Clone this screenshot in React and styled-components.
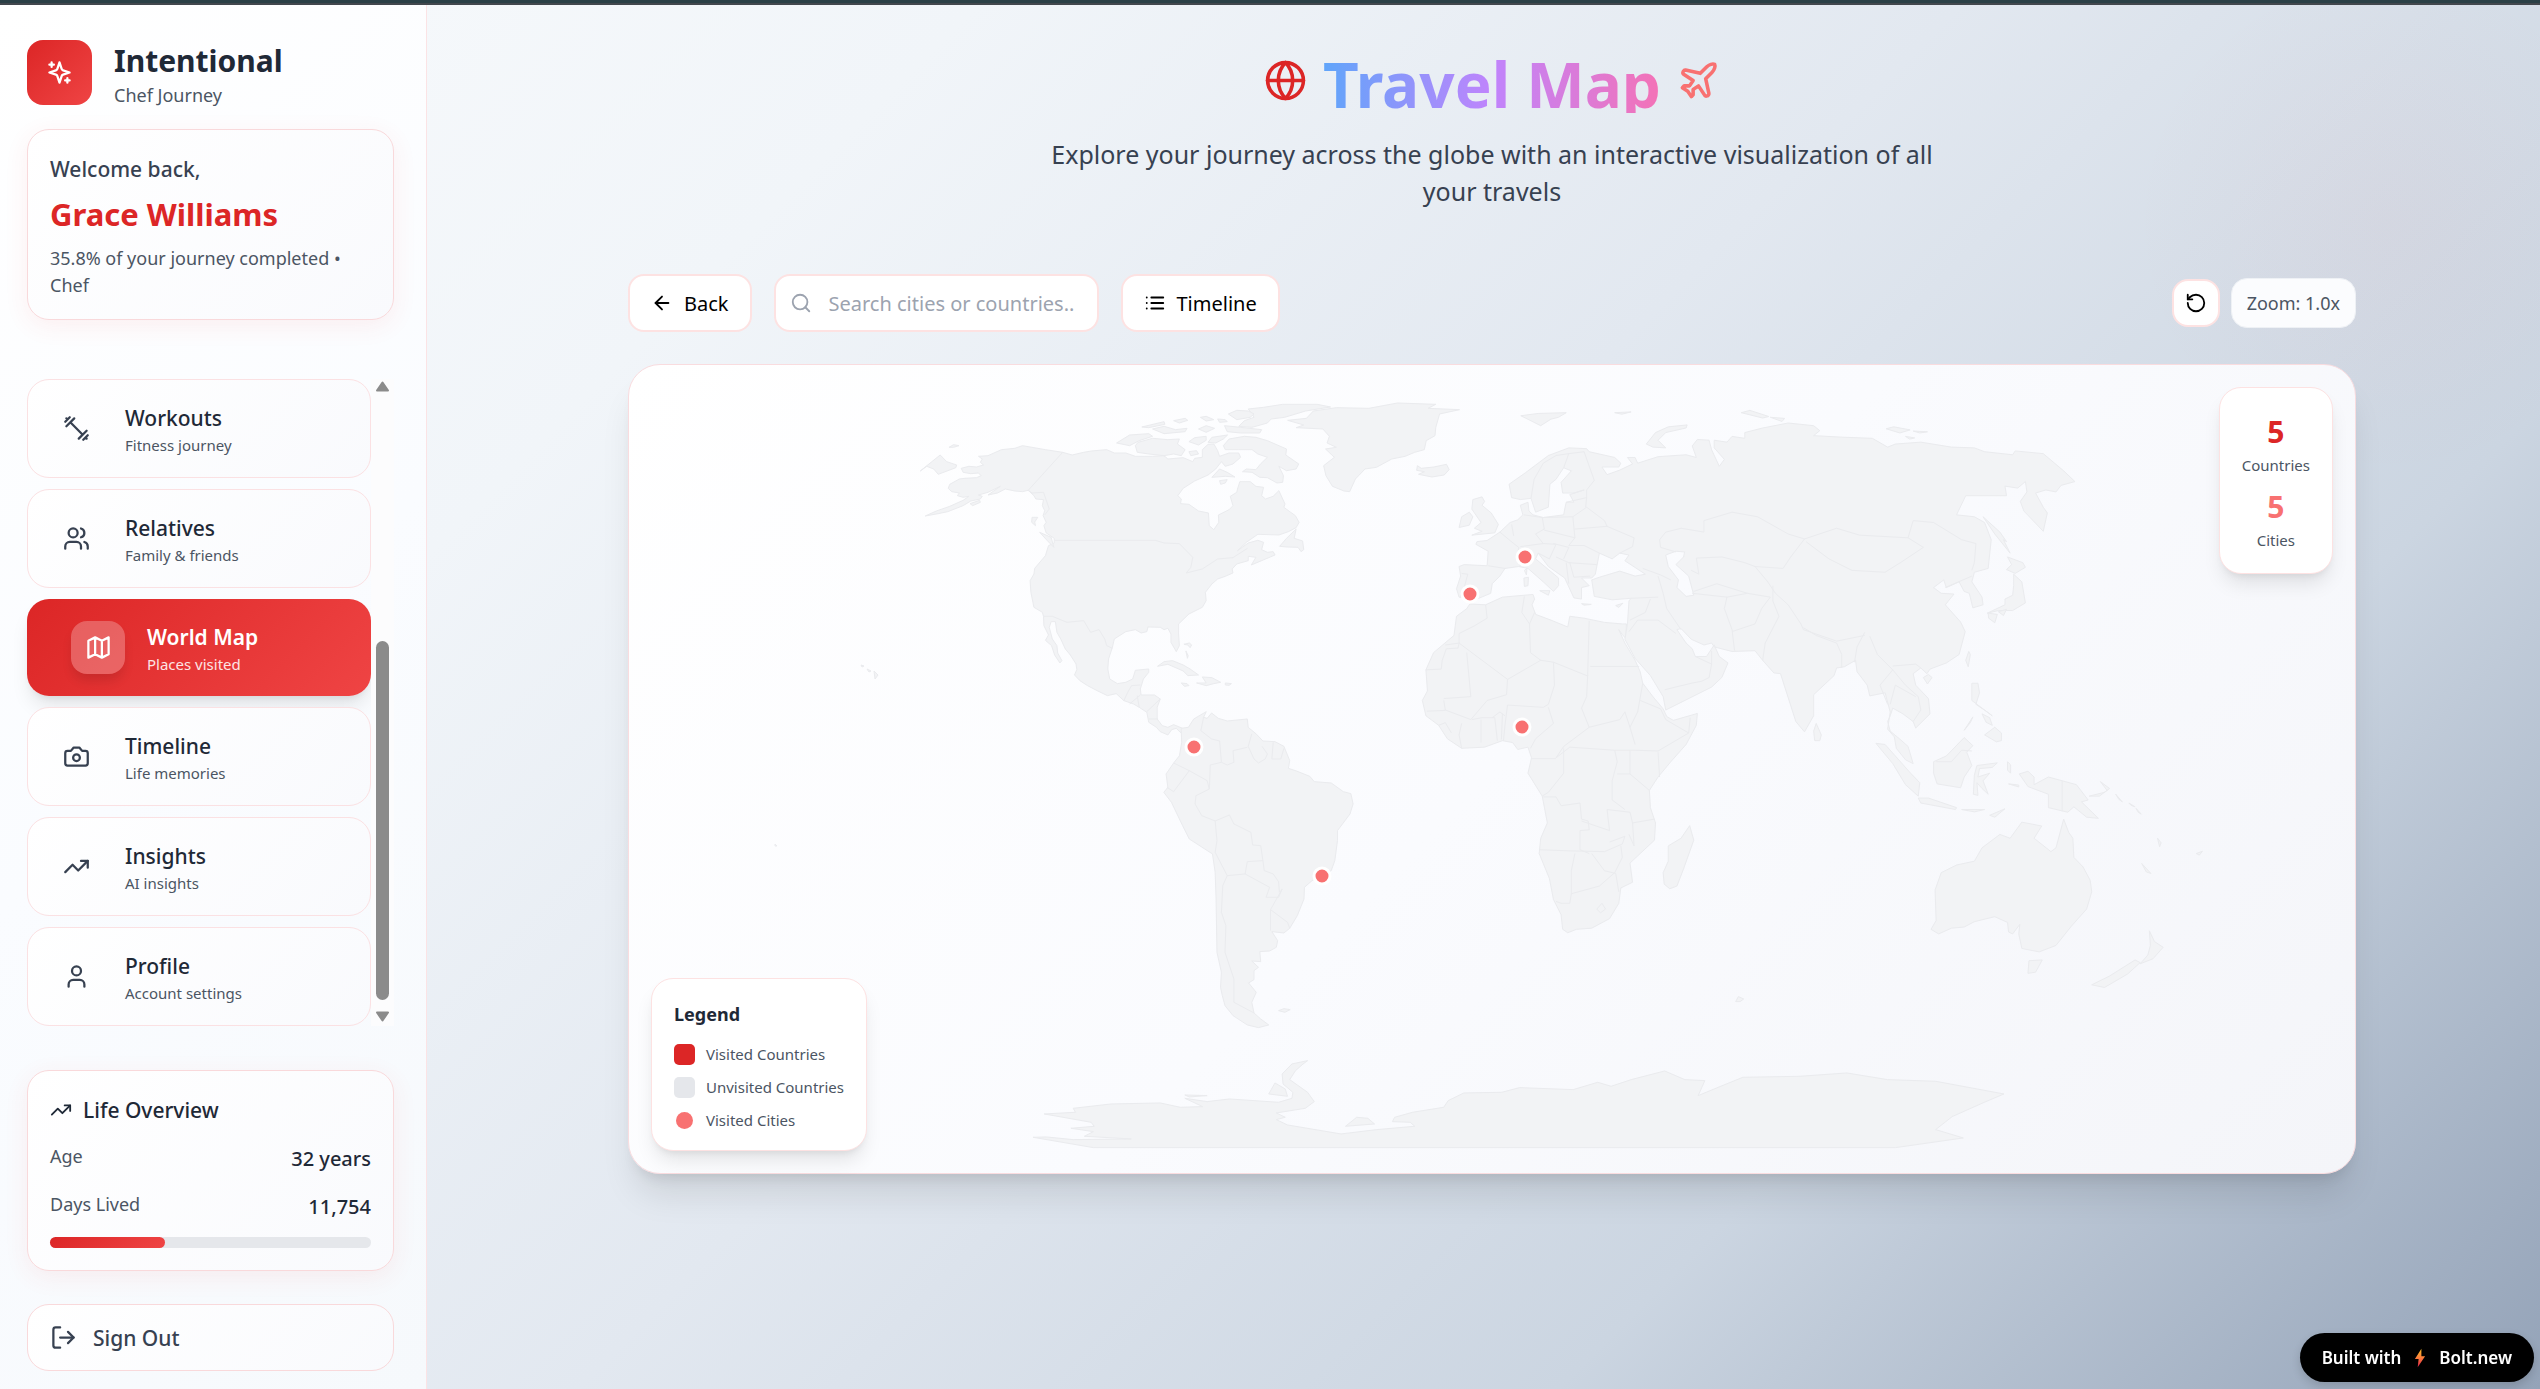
import React from 'react'
import styled, { createGlobalStyle, css } from 'styled-components'
import { ArrowLeft, Globe, LogOut, Plane, RotateCcw, Search, TrendingUp, User, Users } from 'lucide-react'

const GlobalStyle = createGlobalStyle`
  * { box-sizing: border-box; }
  body {
    margin: 0;
    font-family: 'Noto Sans', 'Open Sans', sans-serif;
    color: #1f2937;
  }
  h1, h2, h3, p, ul, dl, dd { margin: 0; padding: 0; }
  button, input { font-family: inherit; }
`

/* icons that lucide-react draws differently */
const Svg = ({ size = 27, children }) => (
  <svg width={size} height={size} viewBox="0 0 24 24" fill="none" stroke="currentColor" strokeWidth="2" strokeLinecap="round" strokeLinejoin="round" aria-hidden="true">
    {children}
  </svg>
)

const Sparkles = () => (
  <Svg>
    <path d="m12 3-1.912 5.813a2 2 0 0 1-1.275 1.275L3 12l5.813 1.912a2 2 0 0 1 1.275 1.275L12 21l1.912-5.813a2 2 0 0 1 1.275-1.275L21 12l-5.813-1.912a2 2 0 0 1-1.275-1.275L12 3Z" />
    <path d="M5 3v4M19 17v4M3 5h4M17 19h4" />
  </Svg>
)

const Dumbbell = () => (
  <Svg>
    <path d="m6.5 6.5 11 11M21 21l-1-1M3 3l1 1M18 22l4-4M2 6l4-4M3 10l7-7M14 21l7-7" />
  </Svg>
)

const MapIcon = () => (
  <Svg>
    <path d="M3 6l6-3 6 3 6-3v15l-6 3-6-3-6 3ZM9 3v15M15 6v15" />
  </Svg>
)

const Camera = () => (
  <Svg>
    <path d="M14.5 4h-5L7 7H4a2 2 0 0 0-2 2v9a2 2 0 0 0 2 2h16a2 2 0 0 0 2-2V9a2 2 0 0 0-2-2h-3l-2.5-3z" />
    <circle cx="12" cy="13" r="3" />
  </Svg>
)

const ListIcon = () => (
  <Svg size={22}>
    <path d="M8 6h13M8 12h13M8 18h13M3 6h.01M3 12h.01M3 18h.01" />
  </Svg>
)

const navItems = [
  { title: 'Workouts', sub: 'Fitness journey', icon: <Dumbbell /> },
  { title: 'Relatives', sub: 'Family & friends', icon: <Users size={27} /> },
  { title: 'World Map', sub: 'Places visited', icon: <MapIcon />, active: true },
  { title: 'Timeline', sub: 'Life memories', icon: <Camera /> },
  { title: 'Insights', sub: 'AI insights', icon: <TrendingUp size={27} /> },
  { title: 'Profile', sub: 'Account settings', icon: <User size={27} /> },
]

const cities = [
  { name: 'Seville', x: 841, y: 229 },
  { name: 'Milan', x: 896, y: 192 },
  { name: 'Abuja', x: 893, y: 362 },
  { name: 'Bogota', x: 565, y: 382 },
  { name: 'Rio de Janeiro', x: 693, y: 511 },
]

const northAmerica = [
  // mainland
  'M205 232 215 240 210 250 218 258 200 264 180 262 160 268 165 280 185 284 205 282 212 290 200 296 170 298 155 300 130 316 126 328 135 338 155 342 150 350 165 355 180 352 165 364 130 382 95 396 66 411 100 404 125 398 165 380 185 366 210 360 215 352 205 348 230 340 262 322 230 348 255 342 275 330 300 336 320 338 335 334 350 350 355 360 375 362 372 380 378 395 374 410 382 430 376 440 382 462 403 478 403 492 388 500 380 530 352 568 350 585 340 605 342 640 350 685 372 700 375 712 376 740 388 768 380 784 396 800 404 828 418 852 423 845 412 822 410 800 398 780 390 745 395 728 406 728 410 760 420 780 432 810 445 828 460 855 462 872 456 888 470 905 490 920 515 935 542 950 565 944 585 965 610 975 625 985 645 1000 650 1030 670 1045 680 1058 700 1068 710 1052 722 1048 734 1062 738 1048 715 1037 700 1045 685 1040 672 1020 672 985 680 960 665 948 630 948 628 930 636 900 650 880 650 870 615 874 608 900 590 910 568 914 548 900 543 870 545 840 555 805 560 780 590 758 615 752 630 762 645 758 648 744 680 745 690 752 700 748 708 765 708 790 722 818 730 800 728 765 728 735 755 705 790 685 800 665 798 640 815 615 830 600 850 592 870 582 868 570 880 555 910 545 910 532 930 535 918 558 945 545 980 528 975 518 960 520 945 512 950 490 935 484 910 492 882 515 905 490 935 466 990 468 1015 458 1035 446 1043 430 1033 410 1003 385 1006 375 990 335 975 352 955 360 945 350 950 325 930 322 915 308 888 308 882 330 880 340 863 352 870 380 860 392 832 408 833 430 820 452 808 440 806 402 780 396 755 376 733 374 735 360 726 350 740 328 770 306 805 288 825 270 840 248 850 262 870 255 890 235 885 222 860 222 835 232 830 215 820 195 805 196 790 212 790 235 770 238 765 248 740 236 700 240 690 230 660 232 640 232 615 232 590 222 560 222 540 212 500 216 480 220 450 228 425 220 380 212 320 200 300 208 265 212 230 230Z',
  // arctic islands
  'M615 200 622 190 660 178 700 182 730 180 725 195 745 212 735 230 715 225 690 230 650 225 620 220Z',
  'M566 192 600 168 650 164 660 172 625 185 600 200Z',
  'M845 200 860 180 900 172 930 175 960 185 1010 210 1008 228 1042 255 1035 270 1010 275 990 262 1002 290 1000 310 985 312 960 296 940 295 920 280 895 278 905 270 930 272 942 255 960 235 935 225 920 212 885 212 850 212Z',
  'M910 90 950 85 1000 76 1090 76 1125 84 1060 96 1005 115 970 120 960 132 920 145 885 142 900 125 925 115 920 104Z',
  'M848 140 890 145 945 152 940 162 890 162 855 158Z',
  'M858 105 880 94 910 96 925 105 915 115 880 122Z',
  'M755 188 770 176 800 172 800 184 780 198Z',
  'M805 190 815 175 856 168 845 180 825 192Z',
  'M632 144 690 128 692 136 650 146Z',
  'M660 150 690 142 720 152 750 148 745 158 690 164Z',
  'M715 125 745 118 752 124 730 132Z',
  'M780 150 800 140 822 148 800 160Z',
  'M785 115 800 112 820 122 800 126Z',
  'M830 120 850 122 855 128 835 130Z',
  'M755 218 775 215 780 225 760 230Z',
  'M815 295 835 270 855 280 875 294 850 292Z',
  'M835 305 855 302 850 312 838 316Z',
  'M128 205 140 197 154 200 140 205Z',
  // coasts and caribbean
  'M992 502 1010 478 1035 450 1030 478 1052 486 1055 512 1048 518 1040 505 1010 504Z',
  'M365 460 395 475 402 505 385 485Z',
  'M345 415 360 415 352 429 354 440 344 430Z',
  'M53 276 105 228 122 248 148 258 146 266 100 286 88 270 70 262Z',
  'M183 374 208 364 210 370 190 380Z',
  'M673 862 690 848 712 845 740 858 758 870 780 888 752 890 740 876 700 856Z',
  'M775 912 800 912 790 894 815 896 838 910 820 914 800 920Z',
  'M735 912 750 914 755 920 743 922Z',
  'M850 912 866 914 860 919 850 918Z',
  'M742 796 756 792 762 798 758 806 752 798ZM747 816 753 830 751 838Z',
  // greenland, iceland
  'M1013 124 1062 118 1080 96 1140 86 1225 88 1300 72 1400 76 1380 88 1462 92 1410 105 1400 145 1398 170 1375 185 1370 212 1345 220 1320 232 1285 240 1245 265 1215 270 1190 300 1175 338 1160 336 1130 322 1113 290 1107 260 1135 235 1112 210 1140 205 1116 192 1122 172 1105 150 1035 146 1055 138Z',
  'M1352 260 1362 268 1395 264 1428 256 1435 272 1422 288 1390 294 1355 286 1370 278 1350 274Z',
]

const northBorders =
  'M425 220 335 334 345 342 375 340 390 390 378 408M403 484H667L690 492 730 494 765 535 760 565 748 582 790 570 830 540 870 536 908 508M375 712 398 712 436 730 480 725 498 760 520 752 535 780 540 800 555 808M585 965 595 940 605 920 628 918M628 948 600 975M620 950 625 985M645 998 680 960M650 1020 674 1020'

const southAmerica = [
  'M182 208 198 205 210 180 238 158 232 175 240 178 250 162 265 178 285 186 330 180 332 205 350 225 365 246 392 248 412 262 425 305 422 328 440 336 470 352 480 368 518 372 545 398 562 404 567 435 560 465 532 515 532 545 526 605 518 635 475 665 458 685 457 720 442 770 425 808 412 822 385 818 398 845 395 865 380 876 358 878 360 908 340 906 355 925 345 935 345 962 333 972 350 1000 340 1030 345 1062 360 1080 378 1098 355 1106 330 1098 298 1070 280 1040 274 1010 270 985 272 940 262 880 260 720 258 640 252 585 200 540 185 500 160 430 143 400 152 385 148 345 165 312 178 290 183 250 182 215Z',
  'M400 1055 412 1049 426 1052 414 1060Z',
  'M1424 1028 1430 1013 1442 1020 1434 1028Z',
]

const southBorders =
  'M232 175 226 215 250 240 268 246 272 310 285 318 300 310 298 275 330 265M340 225 332 262 345 300 355 312 370 300 375 285 363 262M388 250 385 300 405 300 412 268M165 312 200 335 240 365 245 390 215 410 213 435 228 470 258 486 290 468 300 495 338 520 342 558 360 560 365 605 330 608 325 645M200 335 165 398 150 385M258 486 262 545 258 580 285 650 325 645 380 685 372 715 400 715 408 690M365 605 368 635 388 645 400 668 402 700M285 650 275 680 272 760 282 800 280 880 300 960 300 1030 345 1062M408 690 382 752 420 790 425 808M382 752 382 815M272 310 247 318 245 390'

const antarctica = [
  'M-150 1435-120 1434-60 1442 70 1440-35 1432-15 1418-65 1408-13 1402-20 1390-125 1365-55 1360-60 1348 25 1335 135 1332 180 1345 230 1343 190 1318 240 1328 290 1320 400 1330 430 1318 432 1300 410 1275 408 1245 430 1215 465 1205 455 1215 438 1235 425 1262 465 1300 480 1328 460 1348 395 1362 415 1375 395 1382 420 1398 540 1425 620 1412 705 1402 695 1390 655 1388 660 1375 700 1360 770 1345 780 1325 815 1302 900 1300 940 1286 1060 1292 1115 1270 1145 1282 1190 1262 1265 1236 1310 1262 1355 1265 1340 1310 1385 1285 1440 1255 1568 1252 1673 1242 1764 1262 1872 1267 2025 1305 1981 1330 1909 1373 1872 1412 1934 1437 1782 1466-15 1466Z',
  'M378 1305 392 1272 415 1290 420 1312Z',
  'M550 1402 575 1375 600 1378 615 1395Z',
  'M190 1308 240 1310 200 1314Z',
]

const oldWorld = [
  // africa
  'M176 588 207 590 240 570 300 563 303 575 298 590 305 615 335 630 368 648 372 620 400 625 440 636 475 640 483 640 482 678 475 668 468 655 480 690 500 735 510 765 515 795 535 830 555 862 562 882 575 892 622 874 620 905 600 955 570 1000 545 1040 528 1075 530 1120 540 1160 538 1205 510 1240 490 1265 495 1315 472 1330 468 1370 450 1410 415 1435 385 1438 368 1447 358 1438 355 1400 340 1360 332 1305 312 1240 315 1200 328 1160 318 1090 290 1030 297 990 290 962 270 968 260 950 240 945 205 962 160 965 132 940 115 905 90 880 83 840 93 815 90 760 105 715 145 670 150 620 170 600Z',
  'M565 1220 590 1200 607 1167 615 1205 595 1280 582 1325 568 1332 557 1320 555 1290 565 1260Z',
  // eurasia, with the caspian cut out
  'M155 490 165 485 210 488 212 450 188 432 190 425 210 422 235 400 255 375 270 368 280 355 275 330 290 322 292 345 300 355 320 362 360 355 362 340 365 322 380 322 372 302 400 290 380 298 358 298 355 270 375 240 360 232 345 262 333 275 330 335 305 348 296 312 275 315 258 310 253 275 285 245 330 200 370 180 405 182 410 190 460 205 472 220 468 230 435 230 445 250 470 238 495 222 485 205 500 205 505 220 545 203 600 198 620 205 612 175 622 158 645 160 650 185 665 228 675 210 655 180 655 160 680 165 690 150 715 155 715 140 750 128 800 115 850 122 862 135 850 148 905 152 965 155 995 178 1010 170 1060 165 1120 178 1165 180 1185 190 1240 198 1245 188 1300 195 1340 240 1362 268 1335 278 1325 295 1305 290 1285 298 1300 335 1308 350 1300 398 1262 345 1255 320 1268 295 1265 268 1250 285 1225 280 1228 305 1148 305 1130 355 1165 360 1185 375 1198 420 1192 495 1165 505 1160 530 1180 570 1182 590 1162 598 1155 560 1145 555 1135 530 1110 545 1105 525 1085 545 1100 560 1125 562 1108 590 1138 635 1147 660 1135 720 1110 742 1078 758 1072 770 1060 755 1045 770 1050 800 1075 835 1078 875 1050 912 1045 895 1025 875 1005 860 1000 880 995 895 1000 920 1018 940 1035 960 1045 1005 1030 995 1012 965 1008 935 995 915 1000 870 990 820 960 828 955 800 935 765 932 735 910 752 895 755 890 775 850 825 850 880 832 922 815 895 785 770 772 768 750 735 735 710 690 712 655 700 650 690 635 695 610 680 590 652 582 655 600 690 612 705 618 725 640 725 655 695 665 725 682 742 670 780 650 805 590 845 560 865 555 830 530 775 500 730 480 680 485 640 488 580 492 573 455 577 420 568 415 525 430 518 470 502 500 515 520 510 480 475 488 460 470 455 455 470 430 455 422 510 415 520 395 520 410 540 395 545 395 575 380 572 362 520 330 490 310 455 305 470 350 520 350 540 340 555 320 530 290 495 272 490 245 495 235 515 220 535 217 560 190 575 155 570 150 548 158 515ZM560 460 580 450 597 452 595 465 580 485 605 515 615 565 600 568 582 545 585 525 565 490Z',
  // british isles and the arctic
  'M180 408 200 398 185 390 198 375 180 340 182 315 200 308 205 320 200 330 218 350 232 380 225 402Z',
  'M155 388 160 360 175 348 182 360 175 382Z',
  'M276 96 310 90 365 88 350 100 335 105 315 122 300 112Z',
  'M522 170 540 140 565 125 602 120 600 128 560 140 545 160 560 180 535 178Z',
  'M708 88 725 82 762 98 750 102ZM765 100 793 103 788 111Z',
  'M992 130 1007 125 1039 133 1019 141ZM1045 136 1073 138 1058 141ZM1030 150 1048 154 1038 157Z',
  'M460 88 492 86 474 92Z',
  // mediterranean
  'M282 520 291 518 290 540 283 542ZM283 500 288 495 287 512ZM313 553 333 553 330 565ZM395 587 414 589 400 591ZM462 592 476 586 468 597Z',
  // japan and the pacific rim
  'M1182 360 1215 400 1228 425 1222 420 1235 455 1205 405Z',
  'M1230 465 1260 480 1265 492 1245 508 1228 498 1238 485Z',
  'M1242 510 1258 530 1265 585 1240 605 1212 605 1190 612 1225 590 1225 575 1240 565 1242 540Z',
  'M1192 612 1210 615 1205 637 1193 625ZM1212 608 1228 602 1222 618Z',
  'M1148 735 1154 712 1157 720 1153 752Z',
  'M1065 780 1075 772 1082 780 1073 797Z',
  'M1160 795 1172 795 1175 820 1168 850 1190 870 1200 880 1160 840Z',
  'M1185 930 1205 910 1218 925 1218 945 1208 948Z',
  'M1180 875 1195 885 1200 905 1188 897ZM1145 918 1162 883 1157 898Z',
  'M850 920 855 900 865 930 862 945 852 945Z',
  // indonesia and new guinea
  'M972 952 990 955 1040 1030 1058 1055 1055 1090 1030 1060 1005 1005Z',
  'M1055 1095 1075 1095 1130 1120 1128 1125 1060 1108Z',
  'M1085 1000 1110 985 1145 937 1162 958 1150 975 1160 1010 1145 1040 1138 1068 1092 1058 1085 1030Z',
  'M1165 1035 1170 1010 1210 1003 1200 1015 1175 1018 1172 1040 1195 1030 1182 1050 1192 1085 1180 1070 1170 1055 1172 1088 1163 1085Z',
  'M1230 1000 1236 1008 1236 1030 1230 1022ZM1232 1058 1252 1061 1252 1066Z',
  'M1140 1125 1185 1125 1165 1131ZM1195 1140 1225 1123 1205 1145Z',
  'M1253 1032 1270 1025 1282 1040 1282 1060 1310 1040 1365 1060 1388 1100 1375 1105 1408 1148 1385 1145 1360 1118 1348 1132 1310 1120 1310 1085 1270 1065Z',
  'M1390 1090 1420 1080 1430 1070 1412 1052 1425 1075 1410 1090Z',
  'M1442 1085 1455 1105 1448 1098ZM1468 1108 1480 1118 1472 1114ZM1482 1122 1492 1137 1486 1132ZM1524 1200 1531 1212 1528 1222ZM1493 1266 1511 1292 1502 1288Z',
  // oceania
  'M1100 1290 1130 1270 1165 1260 1180 1225 1215 1190 1235 1200 1258 1158 1297 1168 1282 1200 1315 1235 1325 1225 1340 1150 1350 1185 1358 1200 1360 1250 1378 1275 1392 1310 1395 1340 1385 1385 1355 1430 1325 1480 1292 1497 1258 1488 1252 1450 1254 1425 1240 1450 1232 1445 1230 1420 1205 1405 1165 1418 1145 1432 1120 1435 1095 1450 1080 1438 1090 1415 1088 1335Z',
  'M1272 1520 1298 1518 1285 1550 1270 1553Z',
  'M1508 1442 1518 1470 1535 1485 1515 1515 1490 1528 1505 1505 1510 1480Z',
  'M1480 1518 1490 1525 1465 1555 1420 1590 1395 1583 1430 1560Z',
  'M1600 1240 1612 1234 1606 1244Z',
]

const oldBorders =
  'M207 590 210 625 185 645 155 665 155 690 128 695M90 760 120 758 122 735 130 705 153 703 155 690M170 715 178 830 125 835M155 690 250 785 315 735 295 715 293 640 278 610 283 568M303 610 293 640M315 735 340 740 407 776 410 632M412 751H508M340 740 342 800 330 850M250 785 248 825 210 840 178 890M407 776 405 830 395 860 410 910 360 960 345 990M410 910 470 890 480 870 490 910 500 955M330 850 320 858 250 852 245 905 242 945M330 858 340 900 305 940 295 965M297 992H345M345 990 372 962 460 970 500 970 545 972 605 925M515 795 505 870 490 910M510 840 550 862 560 890 605 925 608 885M460 970 465 1000 455 1050 455 1100 480 1125M465 1032H490L528 1075M490 970V1032M545 975 548 1040M360 965V1030L330 1080 318 1090M320 1092 345 1092 355 1115 392 1108 395 1150 408 1155 410 1178 392 1180 392 1230 410 1240M395 1155 450 1180 445 1125 490 1132 495 1160 538 1150M495 1160 498 1220 488 1190M312 1230 372 1233 440 1235 475 1215 480 1195 450 1210M382 1240 375 1285 375 1345 372 1370 355 1370 345 1365M375 1345 430 1325 460 1290 475 1250 472 1220M415 1240 440 1285 462 1292 468 1340M425 1385 435 1370 442 1385 432 1395ZM180 890 200 885 225 885 230 945M198 890V950M160 900 155 930 160 965M125 840 128 865 178 890M92 868 128 866M220 885 235 870 245 880M240 875 238 942M115 905 128 898 140 925' +
  'M160 508 172 510 165 545 158 568M212 488 245 495M235 400 262 430 272 440 270 460 275 490M258 380 262 410M282 355 318 362 322 392 305 405 320 430 275 438M318 362 378 360 382 415 322 395M378 360 405 335 440 370 445 385 382 392M405 310 403 335M405 290V310L365 322M405 290 420 265 400 190M296 312 302 262 320 220 345 200 370 195 400 190M370 195 360 232M445 385 498 415 495 438 470 455M382 415 370 435 400 435 430 455M340 430 370 440 360 470M320 430 345 432 332 470 310 455M345 465 370 480 425 485M372 480 380 518 412 515M365 480 370 535M548 420 560 400 590 390 635 400 635 370 690 348 740 360 800 405 832 418 805 465 790 495 735 490 715 480 670 465 620 468 625 510 610 500M548 420 550 440 580 452M832 418 895 390 940 408 1035 415 1065 440 1020 480 990 505 925 500 880 470 835 425M1035 415 1045 370 1085 375 1140 420 1168 430 1165 480 1160 500M515 495 550 512 570 525M545 515 555 560 562 600 590 655M492 573 545 570M612 560 680 570 675 600 690 655 695 710M680 570 720 560 765 570 748 600 735 640 690 660M615 555 660 535 720 560M735 490 760 530 775 560 800 590 825 640 830 655 895 685 950 670M770 540V580L782 620 755 690 750 735M830 650 855 670 895 690 905 720 905 755M950 662 935 700 930 740M960 672 975 720 1005 760 980 800 995 850M1005 750 1050 745 1060 755M1005 760 1030 800 1055 830 1060 865 1045 895M1000 850 1010 800 1050 830M488 660 505 630 545 630 580 665M530 575 520 610 490 630M618 725 650 745 645 780 630 790 610 795 558 812M650 745V710M1108 545 1160 515M1337 1050V1130M1090 1000 1120 1000 1140 970 1160 972'

const WorldMap = () => (
  <MapSvg viewBox="0 0 1726 808" role="img" aria-label="World map">
    <g transform="translate(271 14) scale(.3827 .3333)">
      {northAmerica.map((d, i) => <Land key={i} d={d} />)}
      <Border d={northBorders} />
    </g>
    <g transform="translate(471 294) scale(.4464 .3333)">
      {southAmerica.concat(antarctica).map((d, i) => <Land key={i} d={d} />)}
      <Border d={southBorders} />
    </g>
    <g transform="translate(751 14) scale(.5102 .3827)">
      {oldWorld.map((d, i) => <Land key={i} d={d} />)}
      <Border d={oldBorders} />
    </g>
    <Land d="M245 306l4 4-3 4zM238 304l4 2-2 1zM232 300l3 1-2 1zM146 479l2 2-2 0z" />
    {cities.map((c) => (
      <City key={c.name} cx={c.x} cy={c.y} r="8" />
    ))}
  </MapSvg>
)

const App = () => {
  return (
    <Page>
      <GlobalStyle />
      <TopEdge />
      <Shell>
        <Sidebar>
          <Brand>
            <BrandMark><Sparkles /></BrandMark>
            <div>
              <BrandName>Intentional</BrandName>
              <BrandSub>Chef Journey</BrandSub>
            </div>
          </Brand>

          <WelcomeCard>
            <Label>Welcome back,</Label>
            <UserName>Grace Williams</UserName>
            <Muted as="p">35.8% of your journey completed • Chef</Muted>
          </WelcomeCard>

          <NavArea>
            <NavList>
              {navItems.map((item) => (
                <NavItem key={item.title} href="#" $active={item.active}>
                  <NavIcon $active={item.active}>{item.icon}</NavIcon>
                  <span>
                    <NavTitle $active={item.active}>{item.title}</NavTitle>
                    <NavSub $active={item.active}>{item.sub}</NavSub>
                  </span>
                </NavItem>
              ))}
            </NavList>
            <ScrollTrack>
              <svg width="15" height="11" viewBox="0 0 15 11"><path d="M7.5 1.5 13 9.5H2Z" fill="#8b8b8b" stroke="#8b8b8b" strokeWidth="2" strokeLinejoin="round" /></svg>
              <ScrollThumb />
              <svg width="15" height="11" viewBox="0 0 15 11"><path d="M7.5 9.5 13 1.5H2Z" fill="#8b8b8b" stroke="#8b8b8b" strokeWidth="2" strokeLinejoin="round" /></svg>
            </ScrollTrack>
          </NavArea>

          <OverviewCard>
            <OverviewTitle><TrendingUp size={22} /> Life Overview</OverviewTitle>
            <dl>
              <Stat><Muted as="dt">Age</Muted><dd>32 years</dd></Stat>
              <Stat><Muted as="dt">Days Lived</Muted><dd>11,754</dd></Stat>
            </dl>
            <Progress><ProgressFill style={{ width: '35.8%' }} /></Progress>
          </OverviewCard>

          <SignOut type="button"><LogOut size={27} /> Sign Out</SignOut>
        </Sidebar>

        <Main>
          <Hero>
            <TitleRow>
              <Globe size={43} color="#dc2626" />
              <Title>Travel Map</Title>
              <Plane size={43} color="#f87171" />
            </TitleRow>
            <Subtitle>Explore your journey across the globe with an interactive visualization of all your travels</Subtitle>
          </Hero>

          <Toolbar>
            <ToolButton type="button"><ArrowLeft size={22} /> Back</ToolButton>
            <SearchBox>
              <Search size={22} />
              <input type="search" aria-label="Search cities or countries" placeholder="Search cities or countries.." />
            </SearchBox>
            <ToolButton type="button"><ListIcon /> Timeline</ToolButton>
            <ZoomGroup>
              <ResetButton type="button" aria-label="Reset zoom"><RotateCcw size={22} /></ResetButton>
              <ZoomLabel>Zoom: 1.0x</ZoomLabel>
            </ZoomGroup>
          </Toolbar>

          <MapPanel>
            <WorldMap />
            <StatsCard>
              <div>
                <Count $color="#dc2626">5</Count>
                <Small>Countries</Small>
              </div>
              <div>
                <Count $color="#f87171">5</Count>
                <Small>Cities</Small>
              </div>
            </StatsCard>
            <Legend>
              <h3>Legend</h3>
              <LegendRow><Swatch $color="#dc2626" /><Small>Visited Countries</Small></LegendRow>
              <LegendRow><Swatch $color="#e5e7eb" /><Small>Unvisited Countries</Small></LegendRow>
              <LegendRow><Swatch $color="#f87171" $dot /><Small>Visited Cities</Small></LegendRow>
            </Legend>
          </MapPanel>
        </Main>
      </Shell>

      <BoltBadge href="#">
        Built with
        <svg width="12" height="20" viewBox="0 0 13 20" aria-hidden="true">
          <defs>
            <linearGradient id="bolt" x1="0" y1="0" x2="0" y2="1">
              <stop offset="0" stopColor="#fbbf24" />
              <stop offset=".5" stopColor="#fb7c3c" />
              <stop offset="1" stopColor="#e11d48" />
            </linearGradient>
          </defs>
          <path d="M8 0 1 11h4L4 20l8-12H8Z" fill="url(#bolt)" />
        </svg>
        Bolt.new
      </BoltBadge>
    </Page>
  )
}

const red = 'linear-gradient(135deg, #dc2626, #ef4444)'
const cardBg = 'linear-gradient(135deg, #ffffff, #f9fafd)'

const Page = styled.div`
  min-height: 100vh;
  display: flex;
  flex-direction: column;
  background:
    radial-gradient(circle at 94% 16%, rgba(239, 68, 68, 0.03), transparent 260px),
    linear-gradient(135deg, #f8fafc 0%, #f1f5f9 25%, #e2e8f0 50%, #cbd5e1 75%, #94a3b8 100%);
`

const TopEdge = styled.div`
  height: 5px;
  background: #2b4046;
  border-bottom: 2px solid #42474d;
`

const Shell = styled.div`
  flex: 1;
  display: flex;
  gap: 17px;
`

const Sidebar = styled.aside`
  width: 427px;
  flex-shrink: 0;
  display: flex;
  flex-direction: column;
  padding: 33px 32px 18px 27px;
  border-right: 1px solid #fbe3e5;
  background: linear-gradient(135deg, #ffffff, #fafcff 50%, #f6f9fc);
`

const Brand = styled.div`
  display: flex;
  align-items: center;
  gap: 22px;
  margin-bottom: 22px;
`

const BrandMark = styled.div`
  width: 65px;
  height: 65px;
  display: grid;
  place-items: center;
  border-radius: 16px;
  color: #fff;
  background: ${red};
`

const BrandName = styled.h2`
  font-size: 30px;
  line-height: 46px;
  font-weight: 700;
`

const Muted = styled.span`
  font-size: 18px;
  line-height: 27px;
  color: #4b5563;
`

const BrandSub = styled(Muted)`
  display: block;
  line-height: 23px;
`

const card = css`
  border: 1px solid #f9d9db;
  border-radius: 22px;
  background: ${cardBg};
`

const WelcomeCard = styled.section`
  ${card}
  padding: 22px 22px 20px;
  margin-bottom: 59px;
  box-shadow: 0 6px 24px rgba(239, 68, 68, 0.08);
`

const Label = styled.p`
  font-size: 21px;
  line-height: 34px;
  font-weight: 500;
  color: #374151;
`

const UserName = styled.p`
  margin: 4px 0 7px;
  font-size: 31px;
  line-height: 48px;
  font-weight: 700;
  color: #dc2626;
`

const NavArea = styled.div`
  display: flex;
  margin-bottom: 44px;
`

const NavList = styled.nav`
  flex: 1;
  display: flex;
  flex-direction: column;
  gap: 11px;
`

const NavItem = styled.a`
  ${card}
  display: flex;
  align-items: center;
  gap: 22px;
  padding: 22px 21px;
  border-color: #fbe1e3;
  color: inherit;
  text-decoration: none;
  ${(p) => p.$active && css`
    border: 0;
    padding-left: 44px;
    background: ${red};
    box-shadow: 0 13px 20px -4px rgba(0, 0, 0, 0.1), 0 5px 8px -5px rgba(0, 0, 0, 0.1);
  `}
`

const NavIcon = styled.span`
  width: 54px;
  height: 53px;
  display: grid;
  place-items: center;
  border-radius: 16px;
  color: ${(p) => (p.$active ? '#fff' : '#374151')};
  ${(p) => p.$active && css`
    background: rgba(255, 255, 255, 0.25);
    box-shadow: 0 8px 12px -2px rgba(0, 0, 0, 0.12);
  `}
`

const NavTitle = styled.span`
  display: block;
  font-size: 21px;
  line-height: 33px;
  font-weight: ${(p) => (p.$active ? 600 : 500)};
  color: ${(p) => (p.$active ? '#fff' : '#1f2937')};
`

const NavSub = styled.span`
  display: block;
  font-size: 15px;
  line-height: 20px;
  color: ${(p) => (p.$active ? '#fde4e4' : '#4b5563')};
`

const ScrollTrack = styled.div`
  width: 23px;
  padding: 2px 0 4px;
  display: flex;
  flex-direction: column;
  align-items: center;
  background: #fcfcfd;
`

const ScrollThumb = styled.div`
  width: 13px;
  height: 359px;
  margin-top: auto;
  margin-bottom: 11px;
  border-radius: 7px;
  background: #8b8b8b;
`

const OverviewCard = styled.section`
  ${card}
  padding: 22px;
  margin-bottom: 33px;
  box-shadow: 0 6px 24px rgba(239, 68, 68, 0.08);
`

const OverviewTitle = styled.h3`
  display: flex;
  align-items: center;
  gap: 11px;
  margin-bottom: 16px;
  font-size: 21px;
  line-height: 34px;
  font-weight: 500;
`

const Stat = styled.div`
  display: flex;
  justify-content: space-between;
  height: 32px;
  margin-bottom: 16px;
  dd {
    font-size: 20px;
    line-height: 32px;
    font-weight: 500;
  }
`

const Progress = styled.div`
  height: 11px;
  margin-top: -2px;
  border-radius: 6px;
  background: #e5e7eb;
`

const ProgressFill = styled.div`
  height: 100%;
  border-radius: 6px;
  background: ${red};
`

const SignOut = styled.button`
  ${card}
  height: 67px;
  padding: 0 22px;
  display: flex;
  align-items: center;
  gap: 16px;
  font-size: 21px;
  font-weight: 500;
  color: #374151;
`

const Main = styled.main`
  flex: 1;
  min-width: 0;
  padding: 43px 27px 0;
`

const Hero = styled.header`
  display: flex;
  flex-direction: column;
  align-items: center;
  margin-bottom: 64px;
`

const TitleRow = styled.div`
  display: flex;
  align-items: center;
  gap: 16px;
  margin-bottom: 23px;
`

const Title = styled.h1`
  height: 65px;
  font-size: 62px;
  line-height: 72px;
  font-weight: 700;
  color: transparent;
  background: linear-gradient(90deg, #60a5fa, #c084fc 50%, #f472b6);
  -webkit-background-clip: text;
  background-clip: text;
`

const Subtitle = styled.p`
  max-width: 907px;
  font-size: 25px;
  line-height: 37px;
  text-align: center;
  color: #374151;
`

const Toolbar = styled.div`
  max-width: 1728px;
  margin: 0 auto 32px;
  display: flex;
  align-items: center;
  gap: 22px;
`

const control = css`
  height: 58px;
  display: flex;
  align-items: center;
  border: 2px solid #fde2e2;
  border-radius: 16px;
  background: #fff;
`

const ToolButton = styled.button`
  ${control}
  gap: 11px;
  padding: 0 21px;
  font-size: 20px;
  color: #000;
`

const SearchBox = styled.label`
  ${control}
  width: 325px;
  padding-left: 14px;
  color: #9ca3af;
  input {
    flex: 1;
    min-width: 0;
    margin-left: 17px;
    padding: 0;
    border: 0;
    outline: 0;
    background: none;
    font-size: 20px;
    &::placeholder { color: #9ca3af; opacity: 1; }
  }
`

const ZoomGroup = styled.div`
  margin-left: auto;
  display: flex;
  align-items: center;
  gap: 11px;
`

const ResetButton = styled.button`
  ${control}
  width: 48px;
  height: 48px;
  padding: 0;
  justify-content: center;
  color: #000;
`

const ZoomLabel = styled.span`
  padding: 11px 15px;
  border: 1px solid #eef1f5;
  border-radius: 16px;
  background: #fbfcfe;
  font-size: 18px;
  line-height: 26px;
  color: #4b5563;
`

const MapPanel = styled.section`
  position: relative;
  max-width: 1728px;
  margin: 0 auto;
  border: 1px solid #f9dcdf;
  border-radius: 32px;
  background: linear-gradient(135deg, #ffffff, #fafbfe 50%, #f4f5f9);
  box-shadow: 0 27px 34px -7px rgba(0, 0, 0, 0.1), 0 11px 14px -8px rgba(0, 0, 0, 0.1);
`

const MapSvg = styled.svg`
  display: block;
  width: 100%;
  height: auto;
`

const Land = styled.path`
  fill: #f2f3f5;
  fill-rule: evenodd;
  stroke: #eaebee;
  stroke-linejoin: round;
  vector-effect: non-scaling-stroke;
`

const Border = styled.path`
  fill: none;
  stroke: #eaebee;
  stroke-linejoin: round;
  vector-effect: non-scaling-stroke;
`

const City = styled.circle`
  fill: #f87171;
  stroke: #fff;
  stroke-width: 3px;
`

const floating = css`
  position: absolute;
  border: 1px solid #fde2e2;
  border-radius: 22px;
  background: #fff;
  box-shadow: 0 13px 20px -4px rgba(0, 0, 0, 0.1), 0 5px 8px -5px rgba(0, 0, 0, 0.1);
`

const StatsCard = styled.div`
  ${floating}
  top: 22px;
  right: 22px;
  padding: 22px;
  display: flex;
  flex-direction: column;
  gap: 9px;
  text-align: center;
`

const Count = styled.strong`
  display: block;
  font-size: 30px;
  line-height: 44px;
  font-weight: 700;
  color: ${(p) => p.$color};
`

const Small = styled.span`
  display: block;
  font-size: 15px;
  line-height: 22px;
  color: #4b5563;
`

const Legend = styled.div`
  ${floating}
  left: 22px;
  bottom: 22px;
  padding: 22px 22px 19px;
  h3 {
    margin-bottom: 15px;
    font-size: 18px;
    line-height: 27px;
    font-weight: 700;
  }
`

const LegendRow = styled.div`
  height: 22px;
  margin-bottom: 11px;
  display: flex;
  align-items: center;
  gap: 11px;
  &:last-child { margin-bottom: 0; }
`

const Swatch = styled.i`
  width: ${(p) => (p.$dot ? 17 : 21)}px;
  height: ${(p) => (p.$dot ? 17 : 21)}px;
  margin: 0 ${(p) => (p.$dot ? 2 : 0)}px;
  border-radius: ${(p) => (p.$dot ? '50%' : '5px')};
  background: ${(p) => p.$color};
`

const BoltBadge = styled.a`
  position: fixed;
  right: 6px;
  bottom: 7px;
  height: 49px;
  padding: 0 22px;
  display: flex;
  align-items: center;
  gap: 13px;
  border-radius: 25px;
  background: #000;
  box-shadow: 0 4px 10px rgba(0, 0, 0, 0.15);
  color: #fff;
  font-size: 17px;
  font-weight: 600;
  text-decoration: none;
`

export default App
